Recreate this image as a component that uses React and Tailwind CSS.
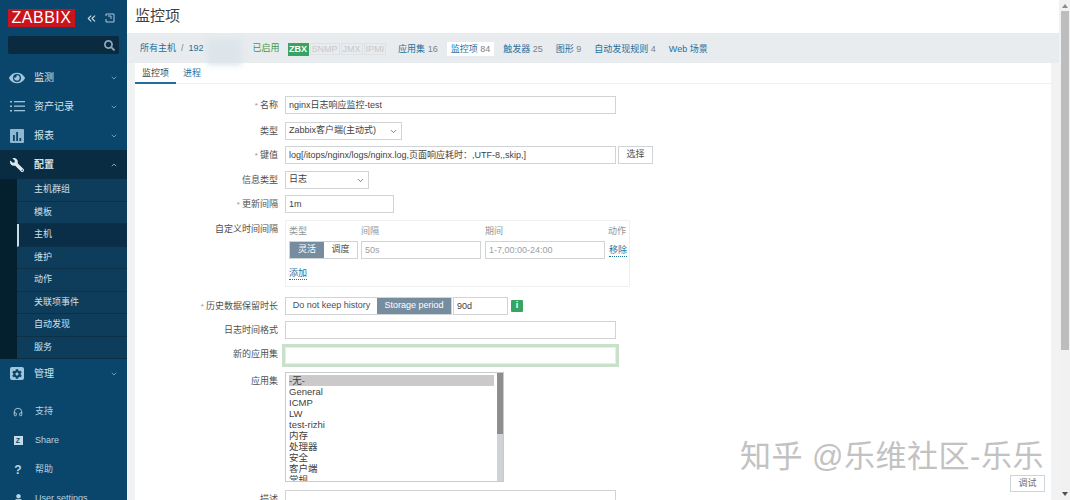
import { FaEye, FaWrench, FaCog, FaUser, FaSearch } from "react-icons/fa";
import { LuChevronDown, LuChevronUp, LuChevronsLeft, LuHeadphones } from "react-icons/lu";

const font = "font-['Liberation_Sans','Noto_Sans_CJK_SC',sans-serif]";

const subItems = ["主机群组", "模板", "主机", "维护", "动作", "关联项事件", "自动发现", "服务"];
const appOptions = ["General", "ICMP", "LW", "test-rizhi", "内存", "处理器", "安全", "客户端", "常规"];

const ListIcon = () => (
  <svg width="15" height="11" viewBox="0 0 15 11" fill="#9fc3d8">
    <rect x="0" y="0" width="2" height="1.5" />
    <rect x="0" y="4.5" width="2" height="1.5" />
    <rect x="0" y="9" width="2" height="1.5" />
    <rect x="4" y="0" width="11" height="1.3" />
    <rect x="4" y="4.5" width="11" height="1.3" />
    <rect x="4" y="9" width="11" height="1.3" />
  </svg>
);

const ReportIcon = () => (
  <svg width="14" height="14" viewBox="0 0 14 14">
    <rect width="14" height="14" rx="1" fill="#8fb7cf" />
    <rect x="3" y="6" width="1.8" height="6" fill="#0a466c" />
    <rect x="6.2" y="3" width="1.8" height="9" fill="#0a466c" />
    <rect x="9.4" y="9" width="1.8" height="3" fill="#0a466c" />
  </svg>
);

const CogIcon = () => (
  <span className="flex h-[13px] w-[14px] items-center justify-center rounded-[2px] bg-[#9fc6dc]">
    <FaCog className="text-[10px] text-[#0a466c]" />
  </span>
);

const MenuItem = ({ icon, label, open, active }) => (
  <div className={`flex h-[29px] shrink-0 items-center pl-[8px] pr-[9px] text-[10px] ${active ? "bg-[#0a2c43]" : ""}`}>
    <span className="mr-[8px] flex w-[18px] justify-center text-[#9fc6dc]">{icon}</span>
    <span className={`flex-1 text-[#d6e4ec] ${active ? "font-bold" : ""}`}>{label}</span>
    {open ? <LuChevronUp className="text-[8px] text-[#c5d8e3]" /> : <LuChevronDown className="text-[8px] text-[#9fc6dc]" />}
  </div>
);

const FootItem = ({ icon, label }) => (
  <div className="flex h-[29px] shrink-0 items-center pl-[9px] text-[9px] text-[#b9d2e0]">
    <span className="mr-[8px] flex w-[18px] justify-center text-[#bcd6e4]">{icon}</span>
    <span>{label}</span>
  </div>
);

const Sidebar = () => (
  <aside className="flex h-[500px] w-[127px] shrink-0 flex-col overflow-hidden bg-[#0a466c]">
    <div className="flex shrink-0 items-center pl-[8px] pt-[9px]">
      <div className="flex h-[18px] w-[67px] items-center justify-center bg-[#c9141c] text-[16px] leading-none tracking-[0.5px] text-white">ZABBIX</div>
      <LuChevronsLeft className="ml-[10px] text-[13px] text-[#c6d9e4]" />
      <svg className="ml-[7px]" width="10" height="10" viewBox="0 0 10 10" fill="none" stroke="#a9c5d6" strokeWidth="1">
        <path d="M1 3V1H9V9H1V6" />
        <path d="M3 3H6V6" />
      </svg>
    </div>
    <div className="mx-[8px] mt-[9px] flex h-[18px] shrink-0 items-center justify-end rounded-[2px] bg-[#0a2a40] pr-[4px]">
      <FaSearch className="text-[11px] text-[#8fa8b8]" />
    </div>
    <div className="mt-[9px] shrink-0">
      <MenuItem icon={<FaEye className="text-[16px]" />} label="监测" />
      <MenuItem icon={<ListIcon />} label="资产记录" />
      <MenuItem icon={<ReportIcon />} label="报表" />
      <MenuItem icon={<FaWrench className="-scale-x-100 text-[14px] text-[#dfe9ef]" />} label="配置" open active />
    </div>
    <div className="flex shrink-0">
      <div className="w-[17px] bg-[#04202f]" />
      <div className="flex-1">
        {subItems.map((item) => (
          <div
            key={item}
            className={`flex h-[22.5px] items-center border-b border-[#0b3048] text-[9px] text-[#d0e0e9] ${item === "主机" ? "border-l-2 border-l-[#c8dbe6] bg-[#0a2e47] pl-[15px]" : "bg-[#0e3c5b] pl-[17px]"}`}
          >
            {item}
          </div>
        ))}
      </div>
    </div>
    <MenuItem icon={<CogIcon />} label="管理" />
    <div className="mt-[9px] shrink-0">
      <FootItem icon={<LuHeadphones className="text-[10px]" />} label="支持" />
      <FootItem
        icon={<span className="flex h-[9px] w-[9px] items-center justify-center bg-[#c5dbe7] text-[7px] font-bold leading-none text-[#0a466c]">Z</span>}
        label="Share"
      />
      <FootItem icon={<span className="text-[12px] font-bold">?</span>} label="帮助" />
      <FootItem icon={<FaUser className="text-[9px]" />} label="User settings" />
    </div>
  </aside>
);

const Row = ({ label, required, className = "", labelClass = "pt-[2px]", children }) => (
  <div className={`flex shrink-0 items-start ${className}`}>
    <div className={`w-[143px] shrink-0 text-right text-[9px] leading-[14px] text-[#4f4f4f] ${labelClass}`}>
      {required && <span className="mr-[2px] text-[8px] text-[#b58a8a]">*</span>}
      {label}
    </div>
    <div className="ml-[7px] flex items-start">{children}</div>
  </div>
);

const Input = ({ className = "", value, muted }) => (
  <div className={`flex h-[18px] shrink-0 items-center border border-[#d0d4d6] bg-white pl-[3px] pt-[1px] text-[9px] ${muted ? "text-[#9aa0a3]" : "text-[#3f3f3f]"} ${className}`}>
    <span className="truncate">{value}</span>
  </div>
);

const Select = ({ className = "", value }) => (
  <div className={`flex h-[18px] items-center justify-between border border-[#d0d4d6] bg-white px-[3px] text-[9px] text-[#3f3f3f] ${className}`}>
    <span>{value}</span>
    <LuChevronDown className="text-[9px] text-[#555]" />
  </div>
);

const Form = () => (
  <div className="flex flex-col pt-[12px]">
    <Row label="名称" required>
      <Input className="w-[331px]" value="nginx日志响应监控-test" />
    </Row>
    <Row label="类型" className="mt-[8px]">
      <Select className="w-[117px]" value="Zabbix客户端(主动式)" />
    </Row>
    <Row label="键值" required className="mt-[6px]">
      <Input className="w-[331px]" value="log[/itops/nginx/logs/nginx.log,页面响应耗时：,UTF-8,,skip,]" />
      <div className="ml-[2px] flex h-[18px] w-[35px] items-center justify-center border border-[#d0d4d6] text-[9px] text-[#4f4f4f]">选择</div>
    </Row>
    <Row label="信息类型" className="mt-[7px]">
      <Select className="w-[84px]" value="日志" />
    </Row>
    <Row label="更新间隔" required className="mt-[6px]">
      <Input className="w-[109px]" value="1m" />
    </Row>
    <Row label="自定义时间间隔" className="mt-[7px]">
      <div className="h-[67px] w-[345px] border border-[#eef0f1] pl-[3px] pt-[3px]">
        <div className="flex whitespace-nowrap text-[9px] leading-[14px] text-[#8f9498]">
          <span className="w-[72px]">类型</span>
          <span className="w-[124px]">间隔</span>
          <span className="w-[123px]">期间</span>
          <span>动作</span>
        </div>
        <div className="mt-[3px] flex items-center whitespace-nowrap">
          <div className="flex h-[18px] w-[69px] shrink-0 border border-[#d0d4d6] text-[9px]">
            <span className="flex w-[34px] items-center justify-center bg-[#768d9f] text-white">灵活</span>
            <span className="flex flex-1 items-center justify-center text-[#4f4f4f]">调度</span>
          </div>
          <Input className="ml-[3px] w-[120px]" muted value="50s" />
          <Input className="ml-[4px] w-[120px]" muted value="1-7,00:00-24:00" />
          <span className="ml-[4px] border-b border-dotted border-[#1f6f9c] text-[9px] leading-[12px] text-[#1f6f9c]">移除</span>
        </div>
        <span className="mt-[6px] inline-block border-b border-dotted border-[#1f6f9c] text-[9px] leading-[12px] text-[#1f6f9c]">添加</span>
      </div>
    </Row>
    <Row label="历史数据保留时长" required className="mt-[10px]">
      <div className="flex h-[18px] w-[167px] shrink-0 whitespace-nowrap border border-[#d0d4d6] text-[9px]">
        <span className="flex w-[91px] items-center justify-center text-[#4f4f4f]">Do not keep history</span>
        <span className="flex flex-1 items-center justify-center bg-[#768d9f] text-white">Storage period</span>
      </div>
      <Input className="ml-[1px] w-[55px]" value="90d" />
      <span className="ml-[3px] mt-[3px] flex h-[12px] w-[12px] items-center justify-center rounded-[1px] bg-[#36a564] text-[9px] font-bold text-white">i</span>
    </Row>
    <Row label="日志时间格式" className="mt-[6px]">
      <Input className="w-[331px]" value="" />
    </Row>
    <Row label="新的应用集" labelClass="pt-[3px]" className="mt-[5px]">
      <div className="-mx-[3px] w-[337px] border-[3px] border-[#c9e0cb] bg-white">
        <div className="h-[17px] border border-[#e6efe6]" />
      </div>
    </Row>
    <Row label="应用集" className="mt-[5px]">
      <div className="flex h-[110px] w-[219px] overflow-hidden border border-[#c7cbce] text-[9.5px] leading-[11px] text-[#3f3f3f]">
        <div className="flex-1 px-[3px] pt-[2px]">
          <div className="bg-[#cbc9ca]">-无-</div>
          {appOptions.map((opt) => (
            <div key={opt}>{opt}</div>
          ))}
        </div>
        <div className="w-[6px] bg-[#d0d3d5]">
          <div className="h-[61px] bg-[#8e8e8e]" />
        </div>
      </div>
    </Row>
    <Row label="描述" className="mt-[8px]">
      <Input className="h-[40px] w-[331px]" value="" />
    </Row>
  </div>
);

const NavLink = ({ label, count, active }) => (
  <span className={`px-[4px] py-[1px] leading-[12px] ${active ? "bg-white" : ""}`}>
    <span className="text-[#1f6f9c]">{label}</span>
    {count && <span className="text-[#7b8388]"> {count}</span>}
  </span>
);

const Main = () => (
  <main className="relative flex h-[500px] flex-1 flex-col overflow-hidden bg-[#f0f2f4]">
    <div className="flex h-[33px] shrink-0 items-center bg-white pl-[8px] text-[15px] text-[#3f3f3f]">监控项</div>
    <div className="flex h-[30px] shrink-0 items-center whitespace-nowrap bg-[#e8ecee] pl-[13px] pt-[2px] text-[9px]">
      <span className="text-[#1f6f9c]">所有主机</span>
      <span className="mx-[5px] text-[#7b8388]">/</span>
      <span className="text-[#1f6f9c]">192</span>
      <span className="ml-[3px] h-[26px] w-[35px] translate-y-[3px] bg-[#dce5eb] blur-[3px]" />
      <span className="ml-[11px] text-[#3f9a4a]">已启用</span>
      <span className="ml-[8px] flex items-center leading-[12px]">
        <span className="flex h-[13px] w-[21px] items-center justify-center bg-[#36a564] font-bold text-white">ZBX</span>
        <span className="ml-[1px] border border-[#dfe2e4] px-[1px] leading-[10px] text-[#c6cacc]">SNMP</span>
        <span className="ml-[1px] border border-[#dfe2e4] px-[1px] leading-[10px] text-[#c6cacc]">JMX</span>
        <span className="ml-[1px] border border-[#dfe2e4] px-[1px] leading-[10px] text-[#c6cacc]">IPMI</span>
      </span>
      <span className="ml-[8px] flex items-center gap-[5px]">
        <NavLink label="应用集" count="16" />
        <NavLink label="监控项" count="84" active />
        <NavLink label="触发器" count="25" />
        <NavLink label="图形" count="9" />
        <NavLink label="自动发现规则" count="4" />
        <NavLink label="Web 场景" />
      </span>
    </div>
    <div className="mx-[8px] flex-1 bg-white">
      <div className="flex h-[21px] border-b border-[#eef0f1] text-[9px]">
        <span className="flex h-[21px] w-[41px] items-center justify-center border-b-2 border-[#1f6f9c] pt-[2px] text-[#3f3f3f]">监控项</span>
        <span className="ml-[7px] flex items-center pt-[2px] text-[#1f6f9c]">进程</span>
      </div>
      <Form />
    </div>
    <div className="absolute left-[613px] top-[439px] whitespace-nowrap text-[31px] leading-[36px] tracking-[0.5px] text-[#c2c2c2]">知乎 @乐维社区-乐乐</div>
    <div className="absolute left-[883px] top-[475px] flex h-[17px] w-[35px] items-center justify-center border border-[#d0d4d6] bg-white text-[9px] text-[#6f6f6f]">调试</div>
  </main>
);

const Scrollbar = () => (
  <div className="flex h-[500px] w-[11px] shrink-0 flex-col items-center bg-[#f1f1f1]">
    <svg className="mt-[4px] shrink-0" width="6" height="4" viewBox="0 0 6 4"><path d="M3 0L6 4H0Z" fill="#8a8a8a" /></svg>
    <div className="mt-[3px] h-[339px] w-[8px] bg-[#bdbdbd]" />
    <svg className="mt-auto mb-[4px] shrink-0" width="6" height="4" viewBox="0 0 6 4"><path d="M3 4L0 0H6Z" fill="#505050" /></svg>
  </div>
);

export default function App() {
  return (
    <div className={`flex h-[500px] w-[1070px] overflow-hidden bg-white ${font}`}>
      <Sidebar />
      <Main />
      <Scrollbar />
    </div>
  );
}
